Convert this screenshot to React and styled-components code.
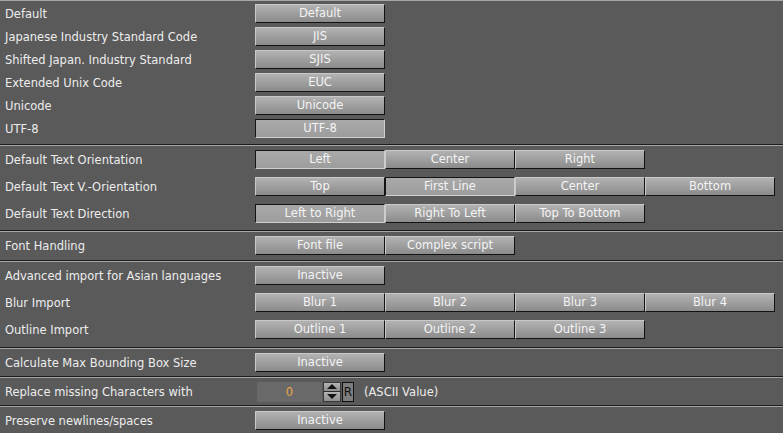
import React from "react";
import styled, { createGlobalStyle } from "styled-components";

const Global = createGlobalStyle`
  html, body { margin: 0; padding: 0; background: #5a5a5a; overflow: hidden; }
  body { font-family: "DejaVu Sans", Tahoma, sans-serif; font-size: 11.5px; color: #ececec; }
`;

const Panel = styled.div`
  width: 783px;
  height: 433px;
  display: flex;
  flex-direction: column;
  background: #5a5a5a;
  overflow: hidden;
`;

const Section = styled.div`
  display: flex;
  flex-direction: column;
  border-top: 1px solid #a6a6a6;
  border-bottom: 1px solid #1c1c1c;
  padding: ${(p) => p.$pad || "0"};
  flex: none;
`;

const Row = styled.div`
  display: grid;
  grid-template-columns: 255px auto;
  align-items: center;
  height: ${(p) => p.$h || 27}px;
`;

const Label = styled.div`
  padding-left: 5px;
  color: #ededed;
  white-space: nowrap;
`;

const Group = styled.div`
  display: flex;
  align-items: center;
`;

const Btn = styled.div`
  box-sizing: border-box;
  width: 130px;
  height: 19px;
  line-height: 17px;
  text-align: center;
  color: #f4f4f4;
  white-space: nowrap;
  border-style: solid;
  border-width: 1px;
  border-color: ${(p) =>
    p.$active ? "#141414 #cfcfcf #cfcfcf #141414" : "#c9c9c9 #121212 #121212 #c9c9c9"};
  background: ${(p) =>
    p.$active
      ? "linear-gradient(#a9a9a9, #9d9d9d)"
      : "linear-gradient(#b2b2b2, #8b8b8b)"};
`;

const NumBox = styled.div`
  box-sizing: border-box;
  margin-left: 2px;
  width: 65px;
  height: 20px;
  line-height: 20px;
  background: #696969;
  color: #e9a447;
  text-align: center;
`;

const Spinner = styled.div`
  box-sizing: border-box;
  margin-left: 1px;
  width: 18px;
  height: 20px;
  display: flex;
  flex-direction: column;
  border: 1px solid #3a3a3a;
`;

const SpinHalf = styled.div`
  flex: 1;
  display: flex;
  align-items: center;
  justify-content: center;
  background: linear-gradient(#b4b4b4, #8e8e8e);
  border-top: ${(p) => (p.$bottom ? "1px solid #2a2a2a" : "none")};
`;

const RBox = styled.div`
  box-sizing: border-box;
  margin-left: 1px;
  width: 12px;
  height: 20px;
  line-height: 18px;
  border: 1px solid #111;
  background: #7d7d7d;
  color: #111;
  font-size: 12px;
  text-align: center;
`;

const Note = styled.span`
  margin-left: 10px;
  color: #ededed;
`;

const Tri = ({ up }) => (
  <svg width="10" height="5" viewBox="0 0 10 5">
    <polygon points={up ? "0,5 10,5 5,0" : "0,0 10,0 5,5"} fill="#111" />
  </svg>
);

const Buttons = ({ items, active }) => (
  <Group>
    {items.map((t, i) => (
      <Btn key={i} $active={i === active}>
        {t}
      </Btn>
    ))}
  </Group>
);

export default function App() {
  const enc = ["Default", "JIS", "SJIS", "EUC", "Unicode", "UTF-8"];
  const encLabels = [
    "Default",
    "Japanese Industry Standard Code",
    "Shifted Japan. Industry Standard",
    "Extended Unix Code",
    "Unicode",
    "UTF-8",
  ];
  return (
    <>
      <Global />
      <Panel>
        <Section $pad="1px 0 4px">
          {encLabels.map((l, i) => (
            <Row key={l} $h={23}>
              <Label>{l}</Label>
              <Buttons items={[enc[i]]} active={i === 5 ? 0 : -1} />
            </Row>
          ))}
        </Section>
        <Section $pad="0 0 3px">
          <Row>
            <Label>Default Text Orientation</Label>
            <Buttons items={["Left", "Center", "Right"]} active={0} />
          </Row>
          <Row>
            <Label>Default Text V.-Orientation</Label>
            <Buttons items={["Top", "First Line", "Center", "Bottom"]} active={1} />
          </Row>
          <Row>
            <Label>Default Text Direction</Label>
            <Buttons items={["Left to Right", "Right To Left", "Top To Bottom"]} active={0} />
          </Row>
        </Section>
        <Section $pad="0 0 1px">
          <Row>
            <Label>Font Handling</Label>
            <Buttons items={["Font file", "Complex script"]} active={-1} />
          </Row>
        </Section>
        <Section $pad="0 0 4px">
          <Row>
            <Label>Advanced import for Asian languages</Label>
            <Buttons items={["Inactive"]} active={-1} />
          </Row>
          <Row>
            <Label>Blur Import</Label>
            <Buttons items={["Blur 1", "Blur 2", "Blur 3", "Blur 4"]} active={-1} />
          </Row>
          <Row>
            <Label>Outline Import</Label>
            <Buttons items={["Outline 1", "Outline 2", "Outline 3"]} active={-1} />
          </Row>
        </Section>
        <Section>
          <Row>
            <Label>Calculate Max Bounding Box Size</Label>
            <Buttons items={["Inactive"]} active={-1} />
          </Row>
        </Section>
        <Section>
          <Row>
            <Label>Replace missing Characters with</Label>
            <Group>
              <NumBox>0</NumBox>
              <Spinner>
                <SpinHalf>
                  <Tri up />
                </SpinHalf>
                <SpinHalf $bottom>
                  <Tri />
                </SpinHalf>
              </Spinner>
              <RBox>R</RBox>
              <Note>(ASCII Value)</Note>
            </Group>
          </Row>
        </Section>
        <Section>
          <Row>
            <Label>Preserve newlines/spaces</Label>
            <Buttons items={["Inactive"]} active={-1} />
          </Row>
        </Section>
      </Panel>
    </>
  );
}
